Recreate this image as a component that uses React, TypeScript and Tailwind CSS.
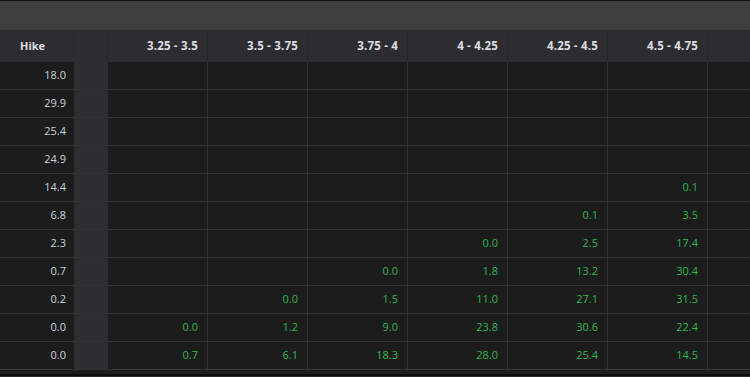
const cols = ["3.25 - 3.5", "3.5 - 3.75", "3.75 - 4", "4 - 4.25", "4.25 - 4.5", "4.5 - 4.75"];

const rows: { hike: string; vals: string[] }[] = [
  { hike: "18.0", vals: ["", "", "", "", "", ""] },
  { hike: "29.9", vals: ["", "", "", "", "", ""] },
  { hike: "25.4", vals: ["", "", "", "", "", ""] },
  { hike: "24.9", vals: ["", "", "", "", "", ""] },
  { hike: "14.4", vals: ["", "", "", "", "", "0.1"] },
  { hike: "6.8", vals: ["", "", "", "", "0.1", "3.5"] },
  { hike: "2.3", vals: ["", "", "", "0.0", "2.5", "17.4"] },
  { hike: "0.7", vals: ["", "", "0.0", "1.8", "13.2", "30.4"] },
  { hike: "0.2", vals: ["", "0.0", "1.5", "11.0", "27.1", "31.5"] },
  { hike: "0.0", vals: ["0.0", "1.2", "9.0", "23.8", "30.6", "22.4"] },
  { hike: "0.0", vals: ["0.7", "6.1", "18.3", "28.0", "25.4", "14.5"] },
];

export default function App() {
  return (
    <div
      className="w-[750px] h-[377px] overflow-hidden bg-[#1c1c1c] text-[11px]"
      style={{ fontFamily: '"Open Sans", "Liberation Sans", sans-serif' }}
    >
      <div className="h-[1px] bg-[#111111]" />
      <div className="h-[29px] bg-[#3f3f3f]" />

      {/* header row */}
      <div className="flex h-[32px] bg-[#2d2d31] font-bold text-[#dcdde0]">
        <div className="w-[74px] shrink-0 pl-[20px] flex items-center border-r border-[#28282b]">Hike</div>
        <div className="w-[34px] shrink-0 border-r border-[#28282b]" />
        {cols.map((c) => (
          <div
            key={c}
            className="w-[100px] shrink-0 pr-[9px] flex items-center justify-end border-r border-[#28282b] text-[11.5px] tracking-[0.2px]"
          >
            {c}
          </div>
        ))}
        <div className="flex-1" />
      </div>

      {/* body */}
      <div>
        {rows.map((r, i) => (
          <div key={i} className="flex h-[28px] border-b border-[#333333]">
            <div className="w-[74px] shrink-0 pr-[8px] flex items-center justify-end text-[#c9d2dc]">{r.hike}</div>
            <div className="w-[34px] shrink-0 bg-[#2e2e32]" />
            {r.vals.map((v, j) => (
              <div
                key={j}
                className="w-[100px] shrink-0 pr-[9px] flex items-center justify-end border-r border-[#333333] text-[#2db84d]"
              >
                {v}
              </div>
            ))}
            <div className="flex-1" />
          </div>
        ))}
      </div>
      <div className="h-[4px]" />
      <div className="h-[2px] bg-[#0c0c0c]" />
      <div className="h-[10px] bg-[#2a2a2a]" />
    </div>
  );
}
